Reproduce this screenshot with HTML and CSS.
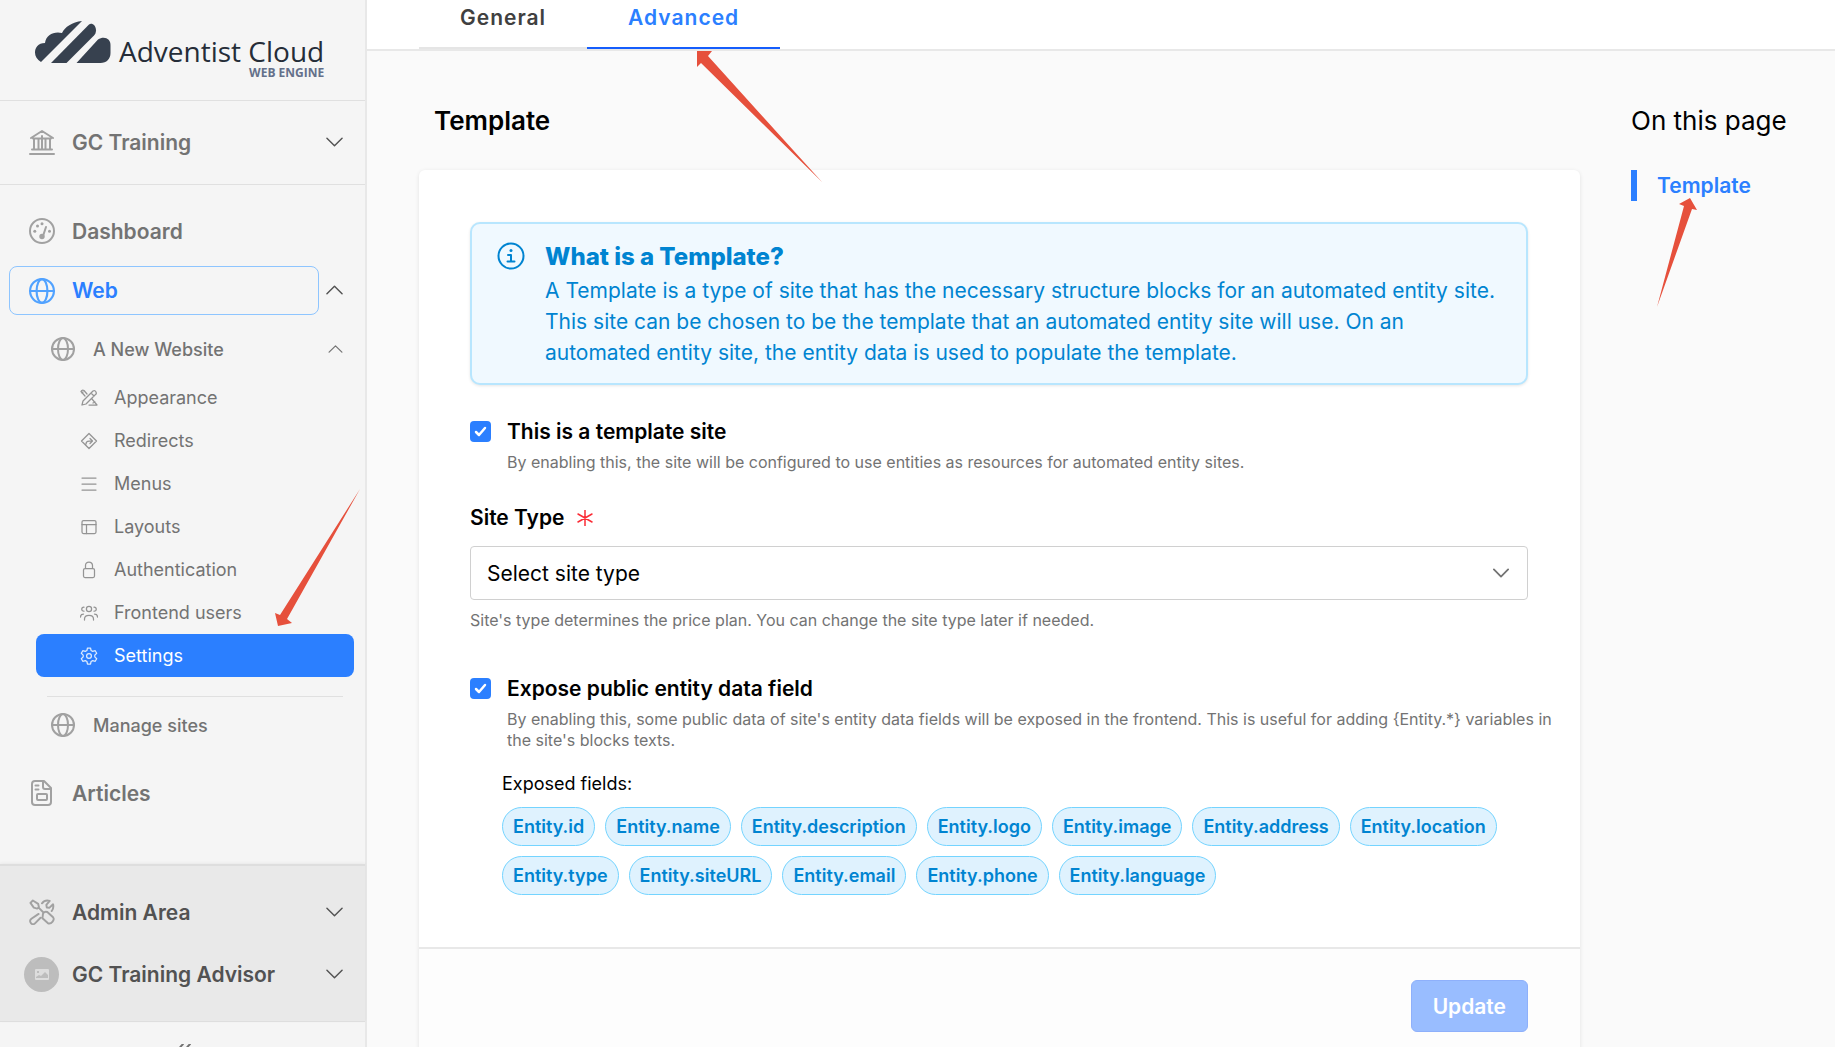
FILE: index.html
```html
<!DOCTYPE html>
<html lang="en">
<head>
<meta charset="utf-8">
<title>Adventist Cloud Web Engine</title>
<link rel="stylesheet" href="styles.css">
</head>
<body>
<svg class="sprite" aria-hidden="true">
  <symbol id="globe" viewBox="0 0 24 24"><circle cx="12" cy="12" r="11"/><ellipse cx="12" cy="12" rx="5" ry="11"/><path d="M1 12h22"/></symbol>
  <symbol id="down" viewBox="0 0 18 10"><path d="M1 1l8 8 8-8"/></symbol>
  <symbol id="up" viewBox="0 0 18 10"><path d="M1 9l8-8 8 8"/></symbol>
</svg>
<aside class="sidebar">
  <a class="logo" href="#" aria-label="Adventist Cloud Web Engine">
    <svg class="logo-mark" viewBox="0 0 76 42"><path d="M47 0C37 1 30 6 27 12 19 10 11 14 10 22 3 22 0 27 0 31.500c0 4 2 7 6 9.500Z"/><path d="M16 42 54 3.500c3-2 7 1 7 6 0 2-1 4-2 5L31.500 42Z"/><path d="M41.500 42 63 18.500c6-4 13-1 12.500 6V32c0 6-4 10-10 10Z"/></svg>
    <span class="logo-text"><span class="logo-name">Adventist Cloud</span><span class="logo-sub">WEB ENGINE</span></span>
  </a>
  <div class="org">
    <a class="row" href="#"><svg class="ico" viewBox="0 0 26 26"><path d="M2 9 13 2l11 7M1 25h24M3 20.500h20M4 9.500h18M5 10v10M9.500 10v10M13 7v13M16.500 10v10M21 10v10"/></svg><span>GC Training</span><svg class="chev"><use href="#down"/></svg></a>
  </div>
  <nav class="nav">
    <a class="row" href="#"><svg class="ico" viewBox="0 0 26 26"><circle cx="13" cy="13" r="12"/><path d="m14 18 3-9"/><g class="solid"><circle cx="13" cy="18.500" r="2.700"/><circle cx="5.800" cy="13.300" r="1.500"/><circle cx="8.500" cy="8" r="1.500"/><circle cx="13" cy="5.800" r="1.500"/><circle cx="20.500" cy="13.300" r="1.500"/></g></svg><span>Dashboard</span></a>
    <div class="row-group"><a class="row active" href="#"><svg class="ico"><use href="#globe"/></svg><span>Web</span></a><button class="toggle" aria-label="Collapse Web"><svg class="chev"><use href="#up"/></svg></button></div>
    <a class="site" href="#"><svg class="ico-md"><use href="#globe"/></svg><span>A New Website</span><svg class="chev-sm"><use href="#up"/></svg></a>
    <ul class="sub">
      <li><a href="#"><svg class="ico-sm" viewBox="0 0 18 18"><path d="m2 16 1-4L13 2q2-1 3 1t-1 3L6 15l-4 1ZM11 4l3 3M7 5 4 1.500Q2 .5 1 2.500L5 7M2 4l1-1M12 10l5 6H9M13 14l2-1"/></svg>Appearance</a></li>
      <li><a href="#"><svg class="ico-sm" viewBox="0 0 18 18"><path d="m9 1.500 7.500 7.500L9 16.500 1.500 9ZM6 12q0-3 3-3h3M10 6.500 12.500 9 10 11.500"/></svg>Redirects</a></li>
      <li><a href="#"><svg class="ico-sm" viewBox="0 0 18 18"><path d="M2 3h14M2 9h14M2 15h14"/></svg>Menus</a></li>
      <li><a href="#"><svg class="ico-sm" viewBox="0 0 18 18"><rect x="2" y="2.500" width="14" height="13" rx="1.500"/><path d="M2 6.500h14M6.500 6.500v9"/></svg>Layouts</a></li>
      <li><a href="#"><svg class="ico-sm" viewBox="0 0 18 18"><rect x="3.500" y="7.500" width="11" height="9" rx="1.500"/><path d="M5.500 7V4.500a3.500 3.500 0 0 1 7 0V7"/></svg>Authentication</a></li>
      <li><a href="#"><svg class="ico-sm" viewBox="0 0 18 18"><circle cx="9" cy="5" r="2.600"/><path d="M4.500 16v-1c0-5 9-5 9 0v1M4 3.200C1 3 1 7.500 4 7.200M14 3.200c3-.2 3 4.300 0 4M.5 13c0-2 1-3 3-3M17.500 13c0-2-1-3-3-3"/></svg>Frontend users</a></li>
      <li><a class="current" href="#"><svg class="ico-sm" viewBox="0 0 18 18"><circle cx="9" cy="9" r="2.400"/><path d="M7.500 1h3l.6 2.500 1.600.9 2.500-.7 1.500 2.600-1.900 1.800v1.800l1.900 1.800-1.500 2.600-2.500-.7-1.600.9-.6 2.500h-3l-.6-2.500-1.600-.9-2.500.7-1.500-2.600 1.900-1.800V8.100L1.300 6.300l1.500-2.600 2.500.7 1.600-.9Z"/></svg>Settings</a></li>
    </ul>
    <hr class="divider">
    <a class="site" href="#"><svg class="ico-md"><use href="#globe"/></svg><span>Manage sites</span></a>
    <a class="row articles" href="#"><svg class="ico" viewBox="0 0 26 26"><path d="M6 1h9l7 7v14q0 3-3 3H6q-3 0-3-3V4q0-3 3-3ZM14 1.500V7q0 2 2 2h6M6.500 5.500h3M6.500 9.500h3"/><rect x="8" y="14" width="10" height="6" rx="1"/></svg><span>Articles</span></a>
  </nav>
  <div class="account">
    <a class="row" href="#"><svg class="ico" viewBox="0 0 27 27"><path d="M1.500 4 4 1.500 9.500 5l.8 3.500L8.500 10 5 9ZM10 9l5 5M14.500 15.500q1-3 4.500-2l6 5.500q1.500 2-.5 4.500-2.500 3-5 1.500L14 20ZM10 15.500l-7.500 5q-2.500 2-.5 4.500t4.500 0L12 19.500M13.500 4.500q3-4 8-2.500l-3.500 4 .5 2.800 2.800.2L25 5.500q1 4-1.500 7"/></svg><span>Admin Area</span><svg class="chev"><use href="#down"/></svg></a>
    <a class="row" href="#"><span class="avatar"><svg viewBox="0 0 14 11"><path fill-rule="evenodd" d="M1 0h12q1 0 1 1v9q0 1-1 1H1q-1 0-1-1V1q0-1 1-1Zm0 8 3-2 2 1 4-4 3 3v3H1ZM2 2v2h2V2Z"/></svg></span><span>GC Training Advisor</span><svg class="chev"><use href="#down"/></svg></a>
  </div>
  <button class="collapse" aria-label="Collapse sidebar"><svg viewBox="0 0 16 16"><path d="M8 0 1 8l7 8M15 0 8 8l7 8"/></svg></button>
</aside>

<main class="main">
  <nav class="tabs"><a class="tab" href="#">General</a><a class="tab selected" href="#">Advanced</a></nav>
  <div class="content">
    <section class="settings">
      <h1 class="heading">Template</h1>
      <form class="card">
        <div class="fields">
          <div class="info">
            <svg class="info-ico" viewBox="0 0 28 28"><circle cx="14" cy="14" r="12.500"/><path d="M11 13h3v6M10.500 19.500h7"/><circle class="solid" cx="14" cy="8.500" r="1.500"/></svg>
            <div><h2>What is a Template?</h2><p>A Template is a type of site that has the necessary structure blocks for an automated entity site. This site can be chosen to be the template that an automated entity site will use. On an automated entity site, the entity data is used to populate the template.</p></div>
          </div>
          <div class="check">
            <input type="checkbox" id="is-template" checked>
            <div><label for="is-template">This is a template site</label><p class="help">By enabling this, the site will be configured to use entities as resources for automated entity sites.</p></div>
          </div>
          <div class="type">
            <label for="site-type">Site Type <svg class="required" viewBox="0 0 16 16"><path d="M8 0v16M1 4l14 8M15 4 1 12"/></svg></label>
            <div class="select"><select id="site-type"><option>Select site type</option></select><svg class="select-chev"><use href="#down"/></svg></div>
            <p class="help">Site's type determines the price plan. You can change the site type later if needed.</p>
          </div>
          <div class="check">
            <input type="checkbox" id="expose" checked>
            <div><label for="expose">Expose public entity data field</label><p class="help">By enabling this, some public data of site's entity data fields will be exposed in the frontend. This is useful for adding {Entity.*} variables in the site's blocks texts.</p></div>
          </div>
          <div class="exposed">
            <p>Exposed fields:</p>
            <ul class="chips"><li>Entity.id</li><li>Entity.name</li><li>Entity.description</li><li>Entity.logo</li><li>Entity.image</li><li>Entity.address</li><li>Entity.location</li><li>Entity.type</li><li>Entity.siteURL</li><li>Entity.email</li><li>Entity.phone</li><li>Entity.language</li></ul>
          </div>
        </div>
        <div class="footer"><button class="update" type="button" disabled>Update</button></div>
      </form>
    </section>
    <aside class="toc"><h2>On this page</h2><a href="#">Template</a></aside>
  </div>
</main>
<svg class="arrow arrow-tab" viewBox="0 0 126 132"><path d="M0 0h15l-4 5 114 126L4 12l-4 4Z"/></svg>
<svg class="arrow arrow-settings" viewBox="0 0 86 138"><path d="M85 0 12 130l5 4-14 3L0 124l5 2Z"/></svg>
<svg class="arrow arrow-toc" viewBox="0 0 40 110"><path d="M0 109 27 8l-5-2L33 0l7 12-5-1Z"/></svg>
</body>
</html>
```
FILE: styles.css
```css
* { box-sizing: border-box; }
body { margin: 0; display: flex; height: 100vh; overflow: hidden; font-family: Inter, sans-serif; font-size: 21px; line-height: 31px; background: #fafafa; color: #000; }
h1, h2, p, ul { margin: 0; padding: 0; }
ul { list-style: none; }
a { color: inherit; text-decoration: none; }
button { font: inherit; padding: 0; border: 0; background: none; }
svg { fill: none; stroke: currentColor; stroke-width: 2; stroke-linecap: round; stroke-linejoin: round; flex: none; }
.solid { fill: currentColor; stroke: none; }
.sprite { position: absolute; width: 0; height: 0; }

.sidebar { flex: none; width: 367px; display: flex; flex-direction: column; background: #f5f5f5; border-right: 2px solid #e8e8e8; }
.logo { display: flex; height: 101px; padding: 21px 0 0 35px; gap: 8px; border-bottom: 1px solid #e0e0e0; }
.logo-mark { width: 76px; height: 42px; fill: #37414f; stroke: none; }
.logo-text { display: flex; flex-direction: column; align-items: flex-end; font-family: "Open Sans", sans-serif; }
.logo-name { padding-top: 11px; font-size: 28px; line-height: 38px; color: #252d38; }
.logo-sub { margin-top: -4px; font-size: 12px; line-height: 14px; font-weight: 700; color: #64708a; }
.org { padding: 16px 0 17px; border-bottom: 1px solid #e0e0e0; }
.row { display: flex; align-items: center; height: 50px; padding-left: 29px; padding-right: 22px; font-weight: 600; color: #737373; }
.row > span:not(.avatar) { flex: 1; }
.ico { width: 26px; height: 26px; margin-right: 17px; color: #a1a1a1; }
.chev { width: 17px; height: 10px; color: #525252; stroke-width: 1.5; }
.nav { flex: 1; padding-top: 21px; }
.row-group { display: flex; margin: 10px 0 0 9px; align-items: center; }
.row.active { flex: 1; height: 49px; padding-left: 19px; border: 1px solid #8ec5ff; border-radius: 8px; color: #2b7fff; }
.active .ico { color: #51a2ff; }
.toggle { width: 46px; padding: 0 22px 4px 0; text-align: right; color: #525252; line-height: 10px; }
.site { display: flex; align-items: center; height: 42px; margin-top: 13px; padding: 0 22px 0 51px; font-size: 18px; font-weight: 500; color: #737373; }
.site > span { flex: 1; }
.ico-md { width: 24px; height: 24px; margin-right: 18px; color: #a1a1a1; }
.chev-sm { width: 15px; height: 8px; stroke-width: 1.5; }
.sub { padding: 6px 11px 0 36px; }
.sub a { display: flex; align-items: center; gap: 16px; height: 43px; padding-left: 44px; font-size: 18px; color: #737373; border-radius: 8px; }
.ico-sm { width: 18px; height: 18px; stroke-width: 1.25; color: #949494; }
.sub .current { background: #2b7fff; color: #fff; }
.current .ico-sm { color: #dbeafe; }
.divider { margin: 19px 22px -6px 47px; border: 0; border-top: 1px solid #e0e0e0; }
.articles { margin-top: 22px; }
.account { padding: 15px 0 16px; background: #e9e9e9; border-top: 2px solid #dedede; border-bottom: 1px solid #dedede; box-shadow: 0 -1px 3px #0000000d; }
.account .row { height: 62px; color: #525252; }
.avatar { width: 35px; height: 35px; margin: 0 13px 0 -5px; display: grid; place-items: center; border-radius: 50%; background: #bdbdbd; }
.avatar svg { width: 14px; height: 11px; fill: #ddd; stroke: none; }
.collapse { height: 25px; padding-top: 22px; overflow: hidden; color: #737373; line-height: 0; }
.collapse svg { width: 16px; height: 16px; }

.main { flex: 1; min-width: 0; overflow: hidden; }
.tabs { display: flex; padding-left: 52px; background: #fff; border-bottom: 2px solid #e8e8e8; font-weight: 600; letter-spacing: 1px; }
.tab { height: 49px; padding: 2px 41px 0; border-bottom: 2px solid #e5e5e5; color: #404040; }
.tab.selected { border-color: #155dfc; color: #2b7fff; }
.content { display: flex; gap: 51px; padding: 53px 0 0 52px; }
.settings { flex: 1; min-width: 0; }
.heading { padding-left: 15px; font-size: 26px; line-height: 34px; font-weight: 600; }
.card { display: block; margin-top: 32px; background: #fff; border-radius: 6px; box-shadow: 0 1px 4px #0000001a; }
.fields { padding: 52px 52px 52px 51px; }
.info { display: flex; gap: 20px; padding: 16px 26px 15px 25px; border: 2px solid #b8e6fe; border-radius: 10px; background: #f0f9ff; color: #0084d1; box-shadow: 0 1px 3px #0000001a; }
.info-ico { width: 28px; height: 28px; margin-top: 2px; }
.info h2 { padding-bottom: 1px; font-size: 24px; line-height: 34px; font-weight: 800; }
.check { display: flex; gap: 16px; margin-top: 31px; }
.check input { appearance: none; flex: none; width: 21px; height: 21px; margin: 5px 0 0; border-radius: 4px; background: #2b7fff url("data:image/svg+xml,%3Csvg xmlns='http://www.w3.org/2000/svg' viewBox='0 0 21 21' fill='none' stroke='white' stroke-width='2.500' stroke-linecap='round' stroke-linejoin='round'%3E%3Cpath d='m6 11 3 3 6-7'/%3E%3C/svg%3E"); }
.check label, .type label { font-weight: 600; }
.help { font-size: 16px; line-height: 21px; color: #737373; }
.check .help { margin: 5px -32px 0 0; }
.type { margin: 29px 0 42px; }
.type label { display: flex; align-items: center; gap: 12px; }
.required { width: 16px; height: 16px; color: #fb2c36; stroke-width: 1.5; }
.select { position: relative; margin: 13px 0 10px; }
.select select { appearance: none; width: 100%; height: 54px; padding: 0 16px; border: 1px solid #d0d0d0; border-radius: 4px; background: #fff; font: inherit; color: inherit; }
.select-chev { position: absolute; right: 19px; top: 22px; width: 16px; height: 10px; color: #737373; }
.exposed { padding: 17px 0 0 32px; font-size: 18px; }
.chips { display: flex; flex-wrap: wrap; gap: 10px; margin-top: 8px; }
.chips li { height: 39px; padding: 0 10px; border: 1px solid #74d4ff; border-radius: 20px; background: #dff2fe; color: #0084d1; line-height: 37px; font-weight: 600; }
.footer { display: flex; justify-content: flex-end; padding: 31px 52px; background: #fdfdfd; border-top: 2px solid #e8e8e8; }
.update { height: 52px; padding: 0 21px; border: 1px solid #8eb0fb; border-radius: 6px; background: #99bdff; color: #fff; font-weight: 600; }
.toc { flex: none; width: 204px; }
.toc h2 { font-size: 26px; line-height: 34px; font-weight: 400; }
.toc a { display: block; margin-top: 32px; padding-left: 20px; border-left: 6px solid #2b7fff; color: #2b7fff; font-weight: 600; }

.arrow { position: absolute; fill: #e6503c; stroke: none; }
.arrow-tab { left: 697px; top: 51px; width: 126px; height: 132px; }
.arrow-settings { left: 275px; top: 489px; width: 86px; height: 138px; }
.arrow-toc { left: 1657px; top: 198px; width: 40px; height: 110px; }
```
